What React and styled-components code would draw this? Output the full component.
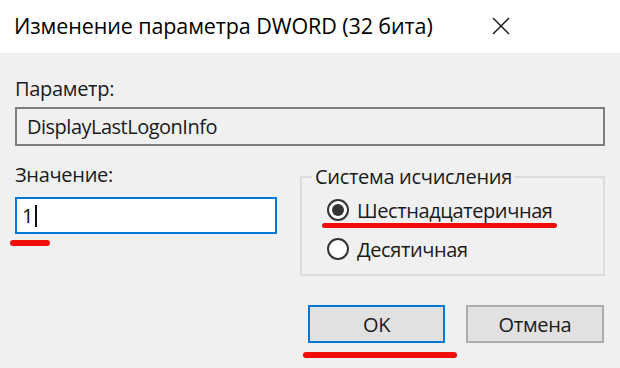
import React from 'react';
import styled, { createGlobalStyle } from 'styled-components';

const GlobalStyle = createGlobalStyle`
  html, body {
    margin: 0;
    padding: 0;
    background: #f0f0f0;
  }
  body {
    font-family: 'Open Sans', 'Noto Sans', sans-serif;
    color: #111;
  }
`;

const Dialog = styled.div`
  width: 620px;
  height: 368px;
  display: flex;
  flex-direction: column;
  overflow: hidden;
`;

const TitleBar = styled.div`
  height: 53px;
  flex-shrink: 0;
  background: #fff;
  display: flex;
  align-items: center;
  padding: 0 110px 2px 14px;
  box-sizing: border-box;
`;

const Title = styled.div`
  font-size: 21.5px;
  line-height: 26px;
  color: #000;
  letter-spacing: -0.1px;
`;

const CloseButton = styled.div`
  margin-left: auto;
  width: 18px;
  height: 18px;
  display: flex;
`;

const Body = styled.div`
  flex: 1;
  background: #f0f0f0;
  padding: 24px 15px 0;
  display: flex;
  flex-direction: column;
`;

const Label = styled.div`
  font-size: 20px;
  line-height: 24px;
  color: #1a1a1a;
  letter-spacing: -0.3px;
`;

const ReadOnlyField = styled.div`
  margin-top: 6px;
  height: 39px;
  box-sizing: border-box;
  border: 2px solid #7d7d7d;
  background: #f0f0f0;
  display: flex;
  align-items: center;
  padding: 0 10px;
  font-size: 20px;
  letter-spacing: -0.5px;
  color: #1a1a1a;
`;

const Row = styled.div`
  margin-top: 17px;
  display: flex;
  align-items: flex-start;
  gap: 23px;
`;

const ValueColumn = styled.div`
  width: 262px;
  display: flex;
  flex-direction: column;
`;

const Marked = styled.div`
  position: relative;
`;

const RedMark = styled.span`
  position: absolute;
  left: ${({ $left }) => $left}px;
  top: calc(100% + ${({ $gap }) => $gap}px);
  width: ${({ $width }) => $width}px;
  height: ${({ $h }) => $h || 6}px;
  border-radius: 3px;
  background: #f20d0d;
`;

const ValueField = styled.div`
  margin-top: 10px;
  height: 37px;
  box-sizing: border-box;
  border: 2px solid #0078d7;
  background: #fff;
  display: flex;
  align-items: center;
  padding: 0 5px;
  font-size: 20px;
  color: #111;
`;

const Caret = styled.span`
  display: inline-block;
  width: 1.5px;
  height: 22px;
  margin-left: 2px;
  background: #111;
`;

const GroupBox = styled.fieldset`
  flex: 1;
  margin: 2px 0 0;
  min-width: 0;
  border: 2px solid #dcdcdc;
  padding: 6px 10px 10px;
`;

const Legend = styled.legend`
  padding: 0 3px;
  font-size: 20px;
  line-height: 24px;
  color: #1a1a1a;
  letter-spacing: -0.3px;
`;

const RadioList = styled.div`
  display: flex;
  flex-direction: column;
  gap: 9px;
  padding-left: 15px;
`;

const RadioRow = styled.div`
  height: 30px;
  display: flex;
  align-items: center;
  gap: 8px;
  font-size: 20px;
  color: #1a1a1a;
  letter-spacing: -0.4px;
`;

const RadioCircle = styled.span`
  width: 22px;
  height: 22px;
  flex-shrink: 0;
  box-sizing: border-box;
  border-radius: 50%;
  border: 2px solid #333;
  background: #fff;
  display: flex;
  align-items: center;
  justify-content: center;

  &::after {
    content: '';
    width: 12px;
    height: 12px;
    border-radius: 50%;
    background: ${({ $checked }) => ($checked ? '#333' : 'transparent')};
  }
`;

const Buttons = styled.div`
  margin-top: 29px;
  display: flex;
  justify-content: flex-end;
  gap: 21px;
  padding-right: 1px;
`;

const Button = styled.div`
  width: ${({ $w }) => $w}px;
  height: 38px;
  box-sizing: border-box;
  background: #e1e1e1;
  border: 2px solid ${({ $default }) => ($default ? '#0078d7' : '#adadad')};
  display: flex;
  align-items: center;
  justify-content: center;
  font-size: 20px;
  color: #1a1a1a;
  letter-spacing: -0.3px;
`;

export default function App() {
  return (
    <Dialog>
      <GlobalStyle />
      <TitleBar>
        <Title>Изменение параметра DWORD (32 бита)</Title>
        <CloseButton>
          <svg width="18" height="18" viewBox="0 0 18 18">
            <path d="M1 1 L17 17 M17 1 L1 17" stroke="#111" strokeWidth="1.4" fill="none" />
          </svg>
        </CloseButton>
      </TitleBar>
      <Body>
        <Label>Параметр:</Label>
        <ReadOnlyField>DisplayLastLogonInfo</ReadOnlyField>
        <Row>
          <ValueColumn>
            <Label>Значение:</Label>
            <Marked>
              <ValueField>
                1<Caret />
              </ValueField>
              <RedMark $left={-5} $gap={6} $width={40} />
            </Marked>
          </ValueColumn>
          <GroupBox>
            <Legend>Система исчисления</Legend>
            <RadioList>
              <Marked>
                <RadioRow>
                  <RadioCircle $checked />
                  Шестнадцатеричная
                </RadioRow>
                <RedMark $left={-5} $gap={-2} $width={235} $h={5} />
              </Marked>
              <RadioRow>
                <RadioCircle />
                Десятичная
              </RadioRow>
            </RadioList>
          </GroupBox>
        </Row>
        <Buttons>
          <Marked>
            <Button $w={137} $default>OK</Button>
            <RedMark $left={-5} $gap={9} $width={154} />
          </Marked>
          <Button $w={138}>Отмена</Button>
        </Buttons>
      </Body>
    </Dialog>
  );
}
